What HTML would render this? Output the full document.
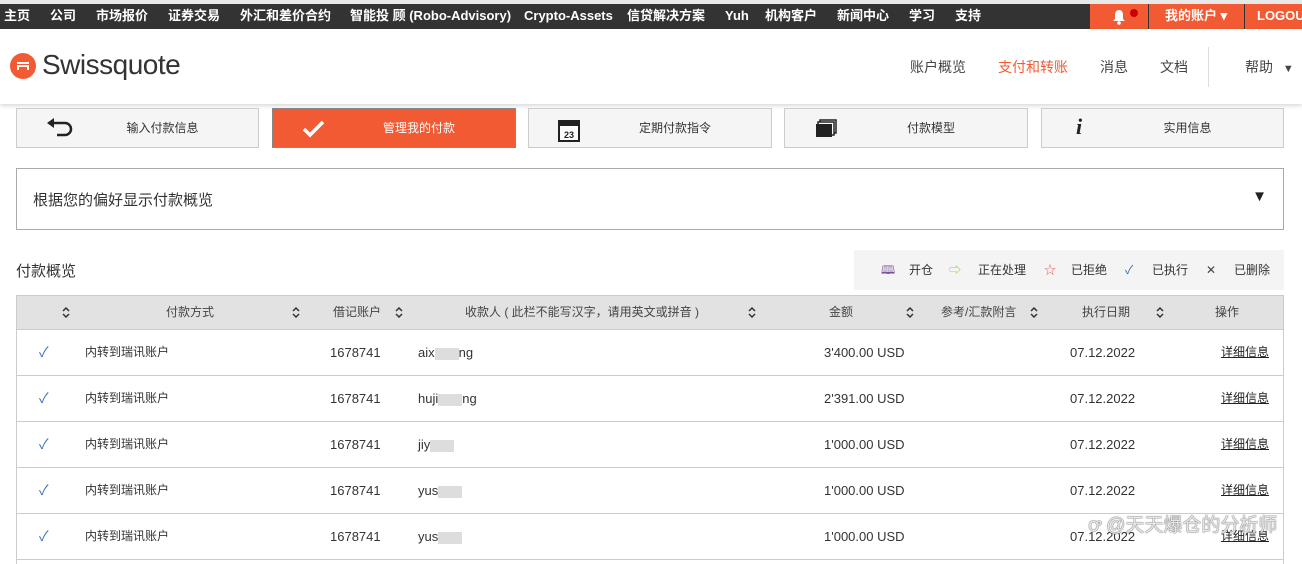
<!DOCTYPE html>
<html><head><meta charset="utf-8"><style>
*{margin:0;padding:0;box-sizing:border-box}
html,body{width:1302px;height:564px;overflow:hidden}
body{background:#fff;font-family:"Liberation Sans","Noto Sans CJK SC",sans-serif;color:#333;position:relative}
.abs{position:absolute}
#top{left:0;top:0;width:1302px;height:4px;background:#e8e8e8}
#bar{left:0;top:4px;width:1302px;height:25px;background:#333;color:#fff;font-size:13px;font-weight:bold}
#bar span{position:absolute;top:0;line-height:24px;white-space:nowrap}
.or{background:#f15a33}
#hdr{left:0;top:29px;width:1302px;height:75px;background:#fff;box-shadow:0 2px 4px rgba(0,0,0,.15)}
.nav{position:absolute;top:28px;font-size:14px;color:#444}
.btn{position:absolute;top:108px;height:40px;border:1px solid #ccc;background:#f5f5f5;font-size:12px;color:#333}
.btn .t{position:absolute;top:10px;left:0;width:100%;text-align:center;padding-left:50px}
.btn .i{position:absolute;left:28px;top:8px}
#sel{left:16px;top:168px;width:1268px;height:62px;border:1px solid #aaa;font-size:15px}
#leg{left:854px;top:250px;width:430px;height:40px;background:#f4f4f4;font-size:12px}
#leg span{position:absolute;top:0;line-height:40px}
#tbl{left:16px;top:295px;width:1268px;height:269px;overflow:hidden;border:1px solid #ccc;border-bottom:none;font-size:12px}
#th{left:0;top:0;width:1266px;height:33px;background:#e2e2e2;color:#444}
#th .c{top:0;line-height:33px}
.c{position:absolute;white-space:nowrap}
.row{position:absolute;left:0;width:1266px;height:46px;border-top:1px solid #ccc}
.row .c{top:0;line-height:45px}
.n{font-size:13px}
.ck{color:#3a6fb6;font-size:14px}
u{color:#222}
.blur{display:inline-block;width:24px;height:12px;background:#ddd;vertical-align:middle}
</style></head><body>
<div id="top" class="abs"></div>
<div id="bar" class="abs">
<span style="left:4px">主页</span><span style="left:50px">公司</span><span style="left:96px">市场报价</span><span style="left:168px">证券交易</span><span style="left:240px">外汇和差价合约</span><span style="left:350px">智能投 顾 (Robo-Advisory)</span><span style="left:524px">Crypto-Assets</span><span style="left:627px">信贷解决方案</span><span style="left:725px">Yuh</span><span style="left:765px">机构客户</span><span style="left:837px">新闻中心</span><span style="left:909px">学习</span><span style="left:955px">支持</span>
<div class="abs or" style="left:1090px;top:0;width:58px;height:25px"><svg class="abs" style="left:22px;top:5px" width="14" height="16" viewBox="0 0 14 16"><path d="M7 1c-3 0-4 2.5-4 5v4l-2 2h12l-2-2V6c0-2.5-1-5-4-5z" fill="#fff"/><circle cx="7" cy="14" r="1.8" fill="#fff"/></svg><div class="abs" style="left:40px;top:5px;width:8px;height:8px;border-radius:4px;background:#c00"></div></div>
<div class="abs or" style="left:1149px;top:0;width:95px;height:25px"><span style="left:16px">我的账户 ▾</span></div>
<div class="abs or" style="left:1245px;top:0;width:57px;height:25px;overflow:hidden"><span style="left:12px">LOGOUT</span></div>
</div>
<div id="hdr" class="abs">
<div class="abs" style="left:10px;top:24px;width:26px;height:26px;border-radius:13px;background:#f15a33"><div class="abs" style="left:7px;top:9px;width:12px;height:2px;background:#fff"></div><div class="abs" style="left:7px;top:12px;width:12px;height:5px;border:2px solid #fff;border-bottom:none"></div></div>
<div class="abs" style="left:42px;top:20px;font-size:28px;color:#333;letter-spacing:-0.5px">Swissquote</div>
<span class="nav" style="left:910px">账户概览</span><span class="nav" style="left:998px;color:#f15a33">支付和转账</span><span class="nav" style="left:1100px">消息</span><span class="nav" style="left:1160px">文档</span>
<div class="abs" style="left:1208px;top:18px;width:1px;height:40px;background:#ddd"></div>
<span class="nav" style="left:1245px">帮助 <span style="font-size:11px;margin-left:6px">▼</span></span>
</div>
<div class="btn" style="left:16px;width:243px"><svg class="i" width="30" height="24" viewBox="0 0 30 24"><path d="M6 6h14a6 6 0 0 1 0 12H12" fill="none" stroke="#222" stroke-width="2.5"/><path d="M2 6l7-5v10z" fill="#222"/></svg><div class="t">输入付款信息</div></div>
<div class="btn" style="left:272px;width:244px;background:#f15a33;border-color:#888;color:#fff"><svg class="i" width="26" height="24" viewBox="0 0 26 24"><path d="M3 12l6 6L22 5" fill="none" stroke="#fff" stroke-width="3.5"/></svg><div class="t">管理我的付款</div></div>
<div class="btn" style="left:528px;width:244px"><svg class="i" width="24" height="26" viewBox="0 0 24 26"><rect x="2" y="4" width="20" height="20" fill="#fff" stroke="#222" stroke-width="2"/><rect x="2" y="4" width="20" height="5" fill="#222"/><text x="12" y="21" font-size="9" text-anchor="middle" font-family="Liberation Sans" font-weight="bold" fill="#222">23</text></svg><div class="t">定期付款指令</div></div>
<div class="btn" style="left:784px;width:244px"><svg class="i" width="26" height="24" viewBox="0 0 26 24"><rect x="7" y="3" width="16" height="13" fill="#fff" stroke="#222" stroke-width="1.5"/><rect x="5" y="5" width="16" height="13" fill="#fff" stroke="#222" stroke-width="1.5"/><rect x="3" y="7" width="16" height="13" fill="#222"/></svg><div class="t">付款模型</div></div>
<div class="btn" style="left:1041px;width:243px"><div class="abs" style="left:34px;top:5px;font:italic bold 22px 'Liberation Serif',serif;color:#222">i</div><div class="t">实用信息</div></div>
<div id="sel" class="abs"><span class="abs" style="left:16px;top:20px">根据您的偏好显示付款概览</span><span class="abs" style="right:16px;top:19px;font-size:15px;color:#222">▼</span></div>
<div class="abs" style="left:16px;top:260px;font-size:15px">付款概览</div>
<div id="leg" class="abs">
<span style="left:27px;color:#7a4f9a">🕮</span><span style="left:55px">开仓</span>
<span style="left:95px;color:#8c4">⇨</span><span style="left:124px">正在处理</span>
<span style="left:190px;color:#e55">☆</span><span style="left:217px">已拒绝</span>
<span style="left:271px;color:#3a6fb6">✓</span><span style="left:298px">已执行</span>
<span style="left:352px;color:#444">✕</span><span style="left:380px">已删除</span>
</div>
<div id="tbl" class="abs">
<div id="th" class="abs">
<svg class="abs" style="left:45px;top:11px" width="8" height="11" viewBox="0 0 8 11"><path d="M1 4l3-3 3 3M1 7l3 3 3-3" fill="none" stroke="#333" stroke-width="1.5"/></svg>
<svg class="abs" style="left:275px;top:11px" width="8" height="11" viewBox="0 0 8 11"><path d="M1 4l3-3 3 3M1 7l3 3 3-3" fill="none" stroke="#333" stroke-width="1.5"/></svg>
<svg class="abs" style="left:378px;top:11px" width="8" height="11" viewBox="0 0 8 11"><path d="M1 4l3-3 3 3M1 7l3 3 3-3" fill="none" stroke="#333" stroke-width="1.5"/></svg>
<svg class="abs" style="left:731px;top:11px" width="8" height="11" viewBox="0 0 8 11"><path d="M1 4l3-3 3 3M1 7l3 3 3-3" fill="none" stroke="#333" stroke-width="1.5"/></svg>
<svg class="abs" style="left:889px;top:11px" width="8" height="11" viewBox="0 0 8 11"><path d="M1 4l3-3 3 3M1 7l3 3 3-3" fill="none" stroke="#333" stroke-width="1.5"/></svg>
<svg class="abs" style="left:1013px;top:11px" width="8" height="11" viewBox="0 0 8 11"><path d="M1 4l3-3 3 3M1 7l3 3 3-3" fill="none" stroke="#333" stroke-width="1.5"/></svg>
<svg class="abs" style="left:1139px;top:11px" width="8" height="11" viewBox="0 0 8 11"><path d="M1 4l3-3 3 3M1 7l3 3 3-3" fill="none" stroke="#333" stroke-width="1.5"/></svg>
<span class="c" style="left:149px">付款方式</span>
<span class="c" style="left:316px">借记账户</span>
<span class="c" style="left:448px">收款人 ( 此栏不能写汉字，请用英文或拼音 )</span>
<span class="c" style="left:812px">金额</span>
<span class="c" style="left:924px">参考/汇款附言</span>
<span class="c" style="left:1065px">执行日期</span>
<span class="c" style="left:1198px">操作</span>
</div>
<div class="row" style="top:33px"><span class="c ck" style="left:22px">✓</span><span class="c" style="left:68px">内转到瑞讯账户</span><span class="c n" style="left:313px">1678741</span><span class="c n" style="left:401px">aix<span class="blur"></span>ng</span><span class="c n" style="left:807px">3'400.00 USD</span><span class="c n" style="left:1053px">07.12.2022</span><span class="c" style="left:1204px"><u>详细信息</u></span></div>
<div class="row" style="top:79px"><span class="c ck" style="left:22px">✓</span><span class="c" style="left:68px">内转到瑞讯账户</span><span class="c n" style="left:313px">1678741</span><span class="c n" style="left:401px">huji<span class="blur"></span>ng</span><span class="c n" style="left:807px">2'391.00 USD</span><span class="c n" style="left:1053px">07.12.2022</span><span class="c" style="left:1204px"><u>详细信息</u></span></div>
<div class="row" style="top:125px"><span class="c ck" style="left:22px">✓</span><span class="c" style="left:68px">内转到瑞讯账户</span><span class="c n" style="left:313px">1678741</span><span class="c n" style="left:401px">jiy<span class="blur"></span></span><span class="c n" style="left:807px">1'000.00 USD</span><span class="c n" style="left:1053px">07.12.2022</span><span class="c" style="left:1204px"><u>详细信息</u></span></div>
<div class="row" style="top:171px"><span class="c ck" style="left:22px">✓</span><span class="c" style="left:68px">内转到瑞讯账户</span><span class="c n" style="left:313px">1678741</span><span class="c n" style="left:401px">yus<span class="blur"></span></span><span class="c n" style="left:807px">1'000.00 USD</span><span class="c n" style="left:1053px">07.12.2022</span><span class="c" style="left:1204px"><u>详细信息</u></span></div>
<div class="row" style="top:217px"><span class="c ck" style="left:22px">✓</span><span class="c" style="left:68px">内转到瑞讯账户</span><span class="c n" style="left:313px">1678741</span><span class="c n" style="left:401px">yus<span class="blur"></span></span><span class="c n" style="left:807px">1'000.00 USD</span><span class="c n" style="left:1053px">07.12.2022</span><span class="c" style="left:1204px"><u>详细信息</u></span></div>
<div class="abs" style="left:0;top:263px;width:1266px;height:1px;background:#ccc"></div>
</div>
<div class="abs" style="left:1088px;top:514px;font-size:19px;line-height:24px;color:rgba(255,255,255,.85);text-shadow:0 0 1px #555,0 0 1px #555">ꝍ @天天爆仓的分析师</div>
</body></html>
